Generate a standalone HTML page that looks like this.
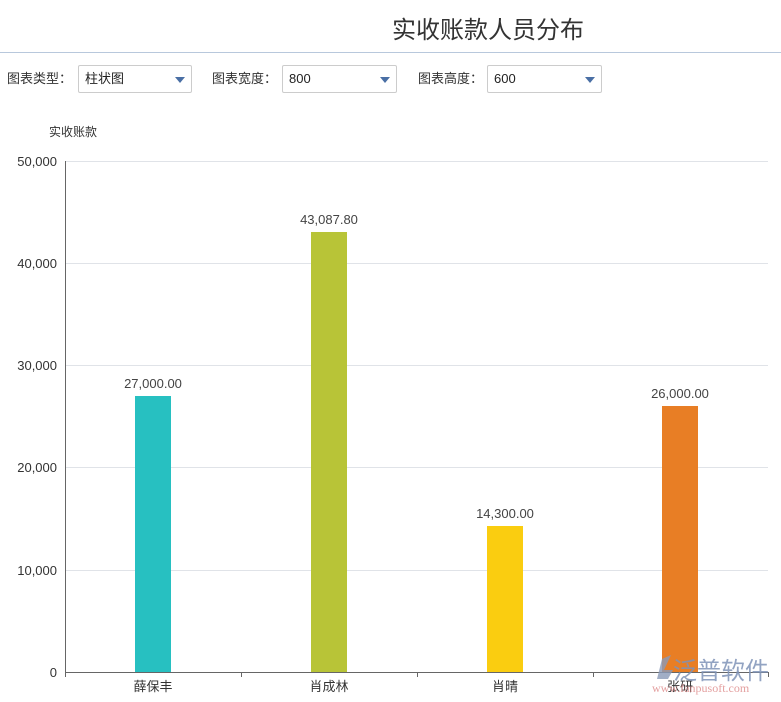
<!DOCTYPE html><html><head><meta charset="utf-8"><style>
body{margin:0;width:781px;height:702px;overflow:hidden;background:#fff;font-family:"Liberation Sans","Noto Sans CJK SC",sans-serif;position:relative}
.t{position:absolute;left:392px;top:10px;font-size:24px;color:#333}
.hr{position:absolute;left:0;top:52px;width:781px;height:1px;background:#b8c8dc}
.l{position:absolute;top:68px;font-size:13px;color:#333}
.s{position:absolute;top:65px;height:28px;width:114px;border:1px solid #ccc;border-radius:2px;box-sizing:border-box;font-size:13px;line-height:25px;padding-left:6px;color:#222}
.s:after{content:"";position:absolute;right:6px;top:11px;border-left:5px solid transparent;border-right:5px solid transparent;border-top:6px solid #4a6fa5}
</style></head><body>
<div class="t">实收账款人员分布</div><div class="hr"></div>
<div class="l" style="left:7px">图表类型：</div><div class="s" style="left:78px">柱状图</div>
<div class="l" style="left:212px">图表宽度：</div><div class="s" style="left:282px;width:115px">800</div>
<div class="l" style="left:418px">图表高度：</div><div class="s" style="left:487px;width:115px">600</div>
<svg width="781" height="702" style="position:absolute;left:0;top:0" font-family="Liberation Sans,Noto Sans CJK SC,sans-serif" font-size="13" fill="#333">
<text x="49" y="136" font-size="12">实收账款</text>
<g stroke="#e0e3e8"><line x1="65" x2="768" y1="161.5" y2="161.5"/><line x1="65" x2="768" y1="263.5" y2="263.5"/><line x1="65" x2="768" y1="365.5" y2="365.5"/><line x1="65" x2="768" y1="467.5" y2="467.5"/><line x1="65" x2="768" y1="570.5" y2="570.5"/></g>
<g text-anchor="end"><text x="57" y="166">50,000</text><text x="57" y="268">40,000</text><text x="57" y="370">30,000</text><text x="57" y="472">20,000</text><text x="57" y="575">10,000</text><text x="57" y="677">0</text></g>
<rect x="135" y="396" width="36" height="276" fill="#27c0c1"/>
<rect x="311" y="232" width="36" height="440" fill="#b8c437"/>
<rect x="487" y="526" width="36" height="146" fill="#facd10"/>
<rect x="662" y="406" width="36" height="266" fill="#e87e25"/>
<g stroke="#666"><line x1="65.5" x2="65.5" y1="161" y2="672"/><line x1="65" x2="768" y1="672.5" y2="672.5"/><line x1="65.5" x2="65.5" y1="672" y2="677"/><line x1="241.5" x2="241.5" y1="672" y2="677"/><line x1="417.5" x2="417.5" y1="672" y2="677"/><line x1="593.5" x2="593.5" y1="672" y2="677"/><line x1="768.5" x2="768.5" y1="672" y2="677"/></g>
<g text-anchor="middle" fill="#444"><text x="153" y="388">27,000.00</text><text x="329" y="224">43,087.80</text><text x="505" y="518">14,300.00</text><text x="680" y="398">26,000.00</text></g>
<g text-anchor="middle"><text x="153" y="691">薛保丰</text><text x="329" y="691">肖成林</text><text x="505" y="691">肖晴</text><text x="680" y="691">张研</text></g>
<path d="M662 659 l9 -4 -7 15 9 0 -5 9 -11 0z" fill="#8a9ab8" opacity=".8"/>
<text x="673" y="679" font-size="24" fill="#7f93b8" opacity=".85">泛普软件</text>
<text x="652" y="692" font-size="12" fill="#d88" font-family="Liberation Serif,serif" opacity=".8">www.fanpusoft.com</text>
</svg>
</body></html>
